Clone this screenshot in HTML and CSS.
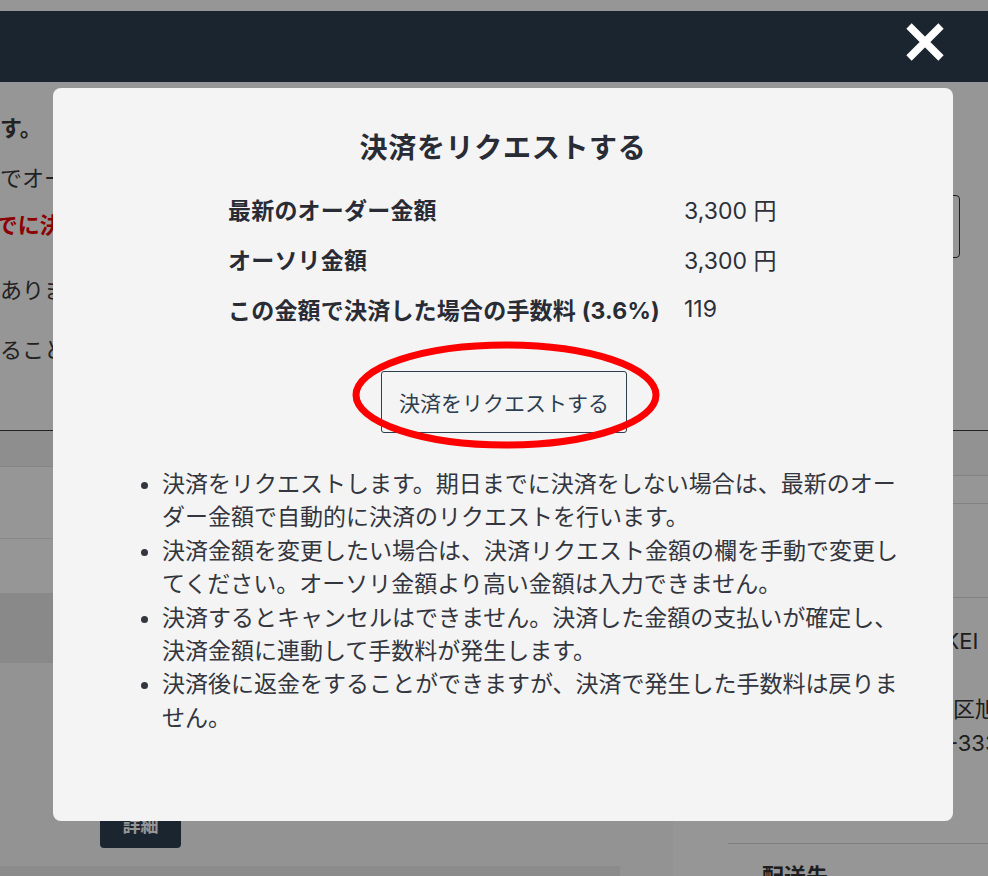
FILE: index.html
```html
<!DOCTYPE html>
<html lang="ja">
<head>
<meta charset="utf-8">
<title>決済をリクエストする</title>
<link rel="stylesheet" href="styles.css">
</head>
<body>
<div class="page">
  <div class="topgap"></div>
  <header class="header"></header>
  <section class="intro">
    <div class="intro-text">
      <div class="bg-line bold l1">決済リクエストできます。</div>
      <div class="bg-line l2">オーダー変更後の金額でオーダーを確定します。</div>
      <div class="bg-line bold red l3">※期日の前日の夜中までに決済してください。</div>
      <div class="bg-line l4">返金の手数料の負担があります。</div>
      <div class="bg-line l5">決済後に全額返金をすることができます。</div>
    </div>
    <div class="intro-side">
      <div class="bg-input"></div>
    </div>
  </section>
  <section class="lower">
    <div class="lower-left">
      <div class="thead"></div>
      <div class="trow r1"></div>
      <div class="trow r2"></div>
      <div class="trow r3"></div>
      <div class="actions"><span class="detail-btn">詳細</span></div>
      <div class="bottom-band"></div>
    </div>
    <div class="lower-right">
      <div class="rrow a"></div>
      <div class="rrow b"></div>
      <div class="rrow c"></div>
      <div class="rtext t1">株式会社サンプル-KEI</div>
      <div class="rtext t2">千葉県千葉市花見川区旭町1-2-3</div>
      <div class="rtext t3">電話番号 03-3333-3333</div>
      <div class="rsep"></div>
      <div class="rhead">配送先</div>
    </div>
  </section>
</div>

<div class="overlay">
  <button class="close" aria-label="閉じる">
    <svg width="40" height="40" viewBox="0 0 40 40"><path d="M4 4 L36 36 M36 4 L4 36" stroke="#ffffff" stroke-width="7.5" fill="none"/></svg>
  </button>
  <div class="modal">
    <h2 class="modal-title">決済をリクエストする</h2>
    <div class="summary">
      <div class="s-label">最新のオーダー金額</div><div class="s-value">3,300 円</div>
      <div class="s-label">オーソリ金額</div><div class="s-value">3,300 円</div>
      <div class="s-label">この金額で決済した場合の手数料 (3.6%)</div><div class="s-value">119</div>
    </div>
    <div class="action-wrap">
      <button class="request-btn">決済をリクエストする</button>
      <svg class="annot" width="312" height="112" viewBox="0 0 312 112"><ellipse cx="156" cy="55" rx="150" ry="50" fill="none" stroke="#ff0000" stroke-width="7"/></svg>
    </div>
    <ul class="notes">
      <li>決済をリクエストします。期日までに決済をしない場合は、最新のオーダー金額で自動的に決済のリクエストを行います。</li>
      <li>決済金額を変更したい場合は、決済リクエスト金額の欄を手動で変更してください。オーソリ金額より高い金額は入力できません。</li>
      <li>決済するとキャンセルはできません。決済した金額の支払いが確定し、決済金額に連動して手数料が発生します。</li>
      <li>決済後に返金をすることができますが、決済で発生した手数料は戻りません。</li>
    </ul>
  </div>
</div>
</body>
</html>
```

FILE: styles.css
```css
* { box-sizing: border-box; }
html, body { margin: 0; padding: 0; }
body {
  width: 988px;
  height: 876px;
  overflow: hidden;
  background: #ffffff;
  font-family: Inter, "Noto Sans CJK JP", sans-serif;
  color: #333333;
}
.page { width: 988px; height: 876px; overflow: hidden; }
.topgap { height: 11px; background: #ffffff; }
.header { height: 71px; background: #2f4051; }

.intro {
  display: flex;
  height: 349px;
  border-bottom: 1px solid #3a3a3a;
}
.intro-text {
  flex: none;
  margin-left: -220px;
  width: 700px;
  padding-top: 31px;
  font-size: 22px;
}
.bg-line { line-height: 30px; white-space: nowrap; color: #3a3a3a; }
.bg-line.bold { font-weight: 700; }
.bg-line.red { color: #f00000; }
.l2 { margin-top: 20px; }
.l3 { margin-top: 17px; }
.l4 { margin-top: 35px; }
.l5 { margin-top: 30px; }
.intro-side { flex: 1; display: flex; justify-content: flex-end; padding-right: 28px; }
.bg-input {
  margin-top: 113px;
  width: 240px;
  height: 63px;
  border: 1px solid #333;
  border-radius: 4px;
}

.lower { display: flex; height: 446px; }
.lower-left { flex: none; width: 673px; background: #fafafa; display: flex; flex-direction: column; }
.thead { flex: none; height: 36px; background: #f1f1f1; border-bottom: 1px solid #e2e2e2; }
.trow { flex: none; border-bottom: 1px solid #e8e8e8; background: #ffffff; }
.trow.r1 { height: 72px; }
.trow.r2 { height: 55px; }
.trow.r3 { height: 69px; background: #e9e9e9; }
.actions { flex: none; height: 203px; padding-left: 100px; padding-top: 137px; }
.detail-btn {
  display: inline-flex;
  align-items: center;
  justify-content: center;
  width: 81px;
  height: 48px;
  background: #2f4051;
  color: #ffffff;
  border-radius: 4px;
  font-size: 18px;
  font-weight: 700;
}
.bottom-band { flex: none; width: 620px; height: 20px; background: #ececec; }

.lower-right {
  flex: 1;
  min-width: 0;
  overflow: hidden;
  background: #ffffff;
  padding-left: 55px;
  display: flex;
  flex-direction: column;
}
.rrow { flex: none; border-bottom: 1px solid #dddddd; margin-left: -55px; }
.rrow.a { height: 45px; background: #f8f8f8; }
.rrow.b { height: 28px; }
.rrow.c { height: 94px; }
.rtext { flex: none; padding-left: 34px; font-size: 22px; line-height: 30px; white-space: nowrap; color: #333; }
.t1 { margin-top: 28px; padding-left: 31px; }
.t2 { margin-top: 38px; padding-left: 27px; }
.t3 { margin-top: 4px; }
.rsep { flex: none; margin-top: 85px; border-bottom: 1px solid #d8d8d8; }
.rhead { flex: none; padding-left: 34px; margin-top: 14px; font-size: 22px; font-weight: 700; color: #333; }

.overlay {
  position: fixed;
  inset: 0;
  background: rgba(0, 0, 0, 0.41);
  padding-top: 88px;
  padding-left: 53px;
}
.close {
  position: absolute;
  top: 22px;
  right: 43px;
  width: 40px;
  height: 40px;
  padding: 0;
  border: 0;
  background: transparent;
}
.close svg { display: block; }

.modal {
  width: 900px;
  background: #f4f4f4;
  border-radius: 8px;
  padding: 40px 0 86px;
  color: #2a2d36;
}
.modal-title {
  margin: 0;
  text-align: center;
  font-size: 28px;
  letter-spacing: 0.7px;
  line-height: 40px;
  font-weight: 700;
  color: #292c35;
}
.summary {
  margin-top: 16px;
  padding-left: 175px;
  display: grid;
  grid-template-columns: 456px auto;
  grid-auto-rows: 50px;
  align-items: center;
}
.s-label { font-size: 23px; letter-spacing: 0.2px; font-weight: 700; color: #292c35; white-space: nowrap; }
.s-value { font-size: 23px; color: #2d3038; white-space: nowrap; }

.action-wrap {
  position: relative;
  margin-top: 37px;
  display: flex;
  justify-content: center;
}
.request-btn {
  height: 62px;
  padding: 0 17px;
  border: 1px solid #2c3e50;
  border-radius: 3px;
  background: #f4f4f4;
  color: #2c3e50;
  font-family: Inter, "Noto Sans CJK JP", sans-serif;
  font-size: 21px;
  margin-left: 2px;
}
.annot {
  position: absolute;
  top: -31px;
  left: 50%;
  margin-left: -153px;
  pointer-events: none;
}

.notes {
  margin: 35px 0 0;
  padding: 0 46px 0 109px;
  font-size: 23px;
  line-height: 33.4px;
  color: #33363e;
}
.notes li { margin: 0; }
```
